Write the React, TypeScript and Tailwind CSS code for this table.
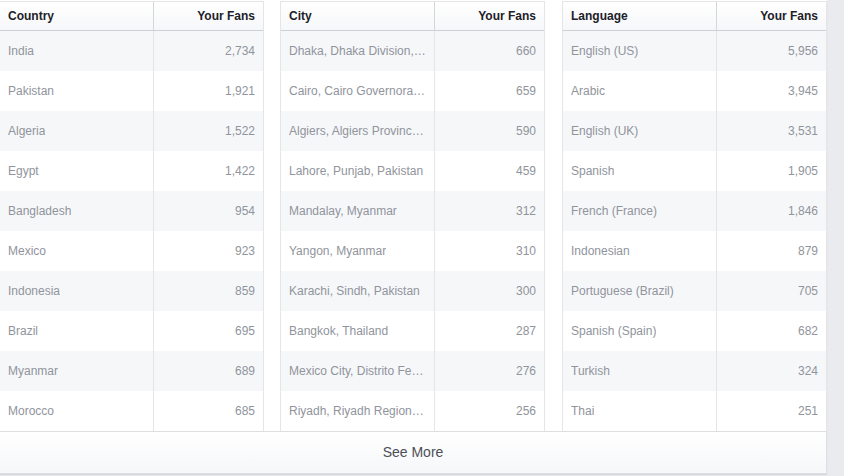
import React from "react";

type Row = [string, string];

interface FansTableProps {
  label: string;
  rows: Row[];
  className?: string;
}

const countries: Row[] = [
  ["India", "2,734"],
  ["Pakistan", "1,921"],
  ["Algeria", "1,522"],
  ["Egypt", "1,422"],
  ["Bangladesh", "954"],
  ["Mexico", "923"],
  ["Indonesia", "859"],
  ["Brazil", "695"],
  ["Myanmar", "689"],
  ["Morocco", "685"],
];

const cities: Row[] = [
  ["Dhaka, Dhaka Division, Bangladesh", "660"],
  ["Cairo, Cairo Governorate, Egypt", "659"],
  ["Algiers, Algiers Province, Algeria", "590"],
  ["Lahore, Punjab, Pakistan", "459"],
  ["Mandalay, Myanmar", "312"],
  ["Yangon, Myanmar", "310"],
  ["Karachi, Sindh, Pakistan", "300"],
  ["Bangkok, Thailand", "287"],
  ["Mexico City, Distrito Federal, Mexico", "276"],
  ["Riyadh, Riyadh Region, Saudi Arabia", "256"],
];

const languages: Row[] = [
  ["English (US)", "5,956"],
  ["Arabic", "3,945"],
  ["English (UK)", "3,531"],
  ["Spanish", "1,905"],
  ["French (France)", "1,846"],
  ["Indonesian", "879"],
  ["Portuguese (Brazil)", "705"],
  ["Spanish (Spain)", "682"],
  ["Turkish", "324"],
  ["Thai", "251"],
];

const FansTable: React.FC<FansTableProps> = ({ label, rows, className }) => {
  return (
    <div className={`w-[265px] shrink-0 border-x border-t border-[#e5e5e5] ${className ?? ""}`}>
      <div className="flex h-[29px] border-b border-[#cdd0d4] bg-gradient-to-b from-white to-[#f6f7f9] text-[12px] font-bold text-[#1d2129]">
        <div className="flex w-[154px] items-center border-r border-[#d3d6db] px-2">{label}</div>
        <div className="flex flex-1 items-center justify-end px-2">Your Fans</div>
      </div>
      {rows.map(([name, fans], index) => (
        <div
          key={index}
          className={`flex h-[40px] text-[12px] text-[#90949c] ${index % 2 === 0 ? "bg-[#f6f7f9]" : "bg-white"}`}
        >
          <div className="flex w-[154px] items-center border-r border-[#e5e5e5] px-2">
            <span className="truncate">{name}</span>
          </div>
          <div className="flex flex-1 items-center justify-end px-2">{fans}</div>
        </div>
      ))}
    </div>
  );
};

export default function App() {
  return (
    <div className="h-[476px] w-full overflow-hidden bg-[#e9ebee] font-['Liberation_Sans',Arial,sans-serif]">
      <div className="w-[827px] bg-white pt-px shadow-[0_1px_1px_rgba(0,0,0,0.08)]">
        <div className="flex">
          <FansTable label="Country" rows={countries} className="-ml-px" />
          <FansTable label="City" rows={cities} className="ml-4" />
          <FansTable label="Language" rows={languages} className="ml-[17px]" />
        </div>
        <div className="flex h-[43px] items-center justify-center border-y border-r border-[#dddfe2] bg-gradient-to-b from-white to-[#f6f7f9] text-[14px] text-[#4b4f56]">
          See More
        </div>
      </div>
    </div>
  );
}
